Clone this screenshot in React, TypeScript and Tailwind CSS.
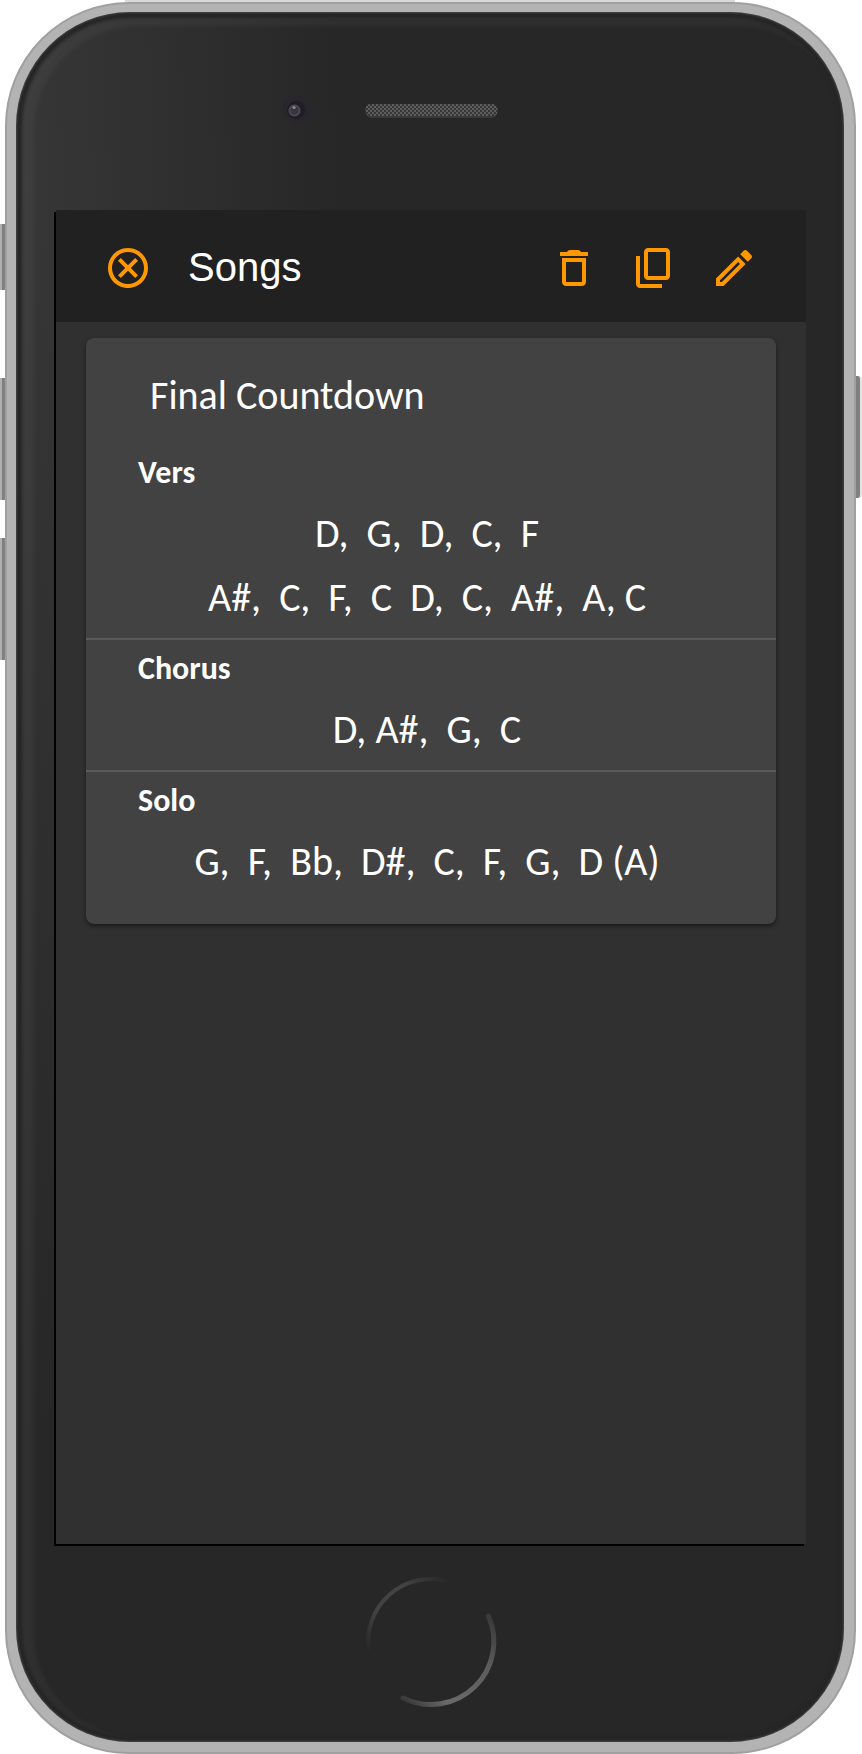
import React from "react";

function Icon({ d }: { d: string }) {
  return (
    <svg viewBox="0 0 24 24" className="size-12 shrink-0 fill-[#ff9800]">
      <path fillRule="evenodd" d={d} />
    </svg>
  );
}

function Toolbar() {
  return (
    <header className="flex h-28 items-center bg-[#212121] px-12 pt-1">
      <Icon d="M12 2C6.47 2 2 6.47 2 12s4.47 10 10 10 10-4.47 10-10S17.53 2 12 2zm0 18c-4.41 0-8-3.59-8-8s3.59-8 8-8 8 3.59 8 8-3.59 8-8 8zM15.59 7 12 10.59 8.41 7 7 8.41 10.59 12 7 15.59 8.41 17 12 13.41 15.59 17 17 15.59 13.41 12 17 8.41z" />
      <h1 className="ml-9 grow pb-[3px] text-[40px] leading-[48px]">Songs</h1>
      <div className="flex gap-8">
        <Icon d="M6 19c0 1.1.9 2 2 2h8c1.1 0 2-.9 2-2V7H6v12zM8 9h8v10H8V9zM15.5 4c-.3-.6-.8-1-1.5-1h-4c-.7 0-1.2.4-1.5 1H5v2h14V4h-3.5z" />
        <Icon d="M18 2H9c-1.1 0-2 .9-2 2v12c0 1.1.9 2 2 2h9c1.1 0 2-.9 2-2V4c0-1.1-.9-2-2-2zm0 14H9V4h9v12zM5 6H3v14c0 1.1.9 2 2 2h11v-2H5V6z" />
        <Icon d="M14.06 9.02l.92.92L5.92 19H5v-.92l9.06-9.06M17.66 3c-.25 0-.51.1-.7.29l-1.83 1.83 3.75 3.75 1.83-1.83c.39-.39.39-1.02 0-1.41l-2.34-2.34c-.2-.2-.45-.29-.71-.29zm-3.6 3.19L3 17.25V21h3.75L17.81 9.94l-3.75-3.75z" />
      </div>
    </header>
  );
}

function Section({ title, lines }: { title: string; lines: string[] }) {
  return (
    <section className="flex flex-col items-center pb-2.5 pr-2">
      <h3 className="h-14 w-full pl-[52px] text-[32px] font-bold leading-[57px]">{title}</h3>
      {lines.map((line) => (
        <p key={line} className="h-16 whitespace-pre text-[40px] leading-[67px]">
          {line}
        </p>
      ))}
    </section>
  );
}

function SongCard() {
  return (
    <article className="mx-[30px] mt-4 h-[586px] rounded-lg bg-[#424242] pt-6 font-[Carlito,Lato,sans-serif] shadow-[0_2px_4px_rgba(0,0,0,0.5)]">
      <h2 className="h-[82px] pl-16 text-[40px] leading-[67px]">Final Countdown</h2>
      <Section title="Vers" lines={["D,  G,  D,  C,  F", "A#,  C,  F,  C  D,  C,  A#,  A, C"]} />
      <div className="h-0.5 bg-[#5a5a5a]" />
      <Section title="Chorus" lines={["D, A#,  G,  C"]} />
      <div className="h-0.5 bg-[#5a5a5a]" />
      <Section title="Solo" lines={["G,  F,  Bb,  D#,  C,  F,  G,  D (A)"]} />
    </article>
  );
}

function Speaker() {
  return (
    <svg viewBox="0 0 828 198" className="h-[198px] w-[828px] shrink-0">
      <defs>
        <pattern id="mesh" width="4" height="4" patternUnits="userSpaceOnUse">
          <rect width="4" height="4" fill="#363636" />
          <rect width="2" height="2" fill="#5e5e5e" />
          <rect x="2" y="2" width="2" height="2" fill="#5e5e5e" />
        </pattern>
        <radialGradient id="lens">
          <stop offset="0" stopColor="#222026" />
          <stop offset="0.5" stopColor="#28242d" />
          <stop offset="1" stopColor="#28242d" stopOpacity="0" />
        </radialGradient>
      </defs>
      <circle cx="281" cy="98" r="17" fill="url(#lens)" />
      <circle cx="280" cy="98" r="9" fill="#201d26" />
      <circle cx="278.5" cy="98.5" r="5" fill="#38363c" stroke="#4c4950" strokeWidth="2" />
      <circle cx="278" cy="95.5" r="1.6" fill="#8b8990" />
      <rect x="349.5" y="94" width="132" height="12" rx="6" fill="#3a3a3a" />
      <rect x="349.5" y="92" width="132" height="12" rx="5" fill="url(#mesh)" />
    </svg>
  );
}

function HomeButton() {
  return (
    <svg viewBox="0 0 140 140" className="size-[140px]" fill="none" strokeLinecap="round">
      <defs>
        <linearGradient id="arcTop" gradientUnits="userSpaceOnUse" x1="6" y1="78" x2="88" y2="8">
          <stop offset="0" stopColor="#272727" />
          <stop offset="0.3" stopColor="#434343" />
          <stop offset="0.65" stopColor="#434343" />
          <stop offset="1" stopColor="#272727" />
        </linearGradient>
        <linearGradient id="arcBottom" gradientUnits="userSpaceOnUse" x1="130" y1="42" x2="40" y2="126">
          <stop offset="0" stopColor="#383838" />
          <stop offset="0.3" stopColor="#5c5c5c" />
          <stop offset="0.75" stopColor="#6a6a6a" />
          <stop offset="1" stopColor="#383838" />
        </linearGradient>
      </defs>
      <path d="M7.5 77A63 63 0 0 1 84 8.5" stroke="url(#arcTop)" strokeWidth="4" />
      <path d="M127.5 44A63 63 0 0 1 42 126" stroke="url(#arcBottom)" strokeWidth="5" />
    </svg>
  );
}

export default function App() {
  return (
    <div className="relative h-[1754px] w-[862px] overflow-hidden bg-white pt-0.5 font-['Liberation_Sans',sans-serif] text-white">
      <div className="absolute left-[125px] top-0 h-0.5 w-[610px] bg-[#d9d9d9]" />
      <div className="absolute left-0 top-[224px] h-[66px] w-2 border-l-2 border-[#b0b0b0] bg-[#808080]" />
      <div className="absolute left-0 top-[378px] h-[122px] w-2 border-l-2 border-[#b0b0b0] bg-[#808080]" />
      <div className="absolute left-0 top-[538px] h-[122px] w-2 border-l-2 border-[#b0b0b0] bg-[#808080]" />
      <div className="absolute right-0 top-[376px] h-[122px] w-2 rounded-r-sm border-r-2 border-[#e4e4e4] bg-[#808080]" />
      <div className="relative ml-[5px] h-[1752px] w-[851px] rounded-[124px] border-2 border-[#a0a0a0] bg-[#b3b3b3] pb-[10px] pl-[9px] pr-[10px] pt-2">
        <div className="flex h-full flex-col items-center overflow-hidden rounded-[114px] bg-[#272727] bg-[radial-gradient(320px_1250px_at_0%_10%,#373737_0%,#272727_100%)] shadow-[inset_0_0_2px_1px_#444,inset_0_0_3px_6px_#262626,inset_9px_5px_5px_9px_rgba(255,255,255,0.045)]">
          <Speaker />
          <main className="ml-[2px] h-[1334px] w-[750px] shrink-0 bg-[#303030] shadow-[-2px_2px_0_#000]">
            <Toolbar />
            <SongCard />
          </main>
          <div className="ml-[2px] mt-[28px]">
            <HomeButton />
          </div>
        </div>
      </div>
    </div>
  );
}
